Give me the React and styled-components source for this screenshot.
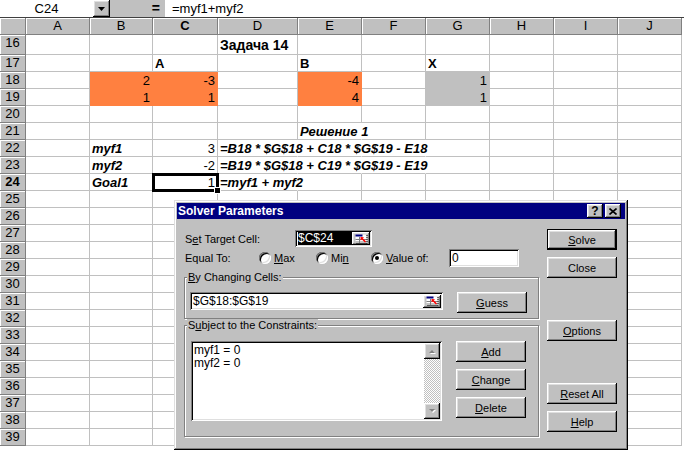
import React from "react";
import styled, { createGlobalStyle } from "styled-components";

const GlobalStyle = createGlobalStyle`
  html, body { margin: 0; padding: 0; }
  body {
    width: 684px;
    height: 450px;
    overflow: hidden;
    background: #fff;
    font-family: "Liberation Sans", Arial, sans-serif;
  }
`;

const ORANGE = "#ff8040";
const SILVER = "#c0c0c0";

const raised = `
  box-shadow: inset -1px -1px #000, inset 1px 1px #fff, inset -2px -2px #808080, inset 2px 2px #dfdfdf;
`;
const sunken = `
  box-shadow: inset 1px 1px #808080, inset -1px -1px #fff, inset 2px 2px #000, inset -2px -2px #dfdfdf;
`;

const Screen = styled.div`
  position: relative;
  width: 684px;
  height: 450px;
  overflow: hidden;
  background: #fff;
  color: #000;
`;

/* formula bar */
const FormulaBar = styled.div`
  display: flex;
  height: 17px;
  border-bottom: 1px solid #404040;
  font-size: 13px;
  line-height: 17px;
`;

const NameBox = styled.div`
  width: 93px;
  text-align: center;
`;

const DropButton = styled.div`
  width: 17px;
  height: 17px;
  box-sizing: border-box;
  background: ${SILVER};
  ${raised}
  display: flex;
  align-items: center;
  justify-content: center;
`;

const EqualsArea = styled.div`
  width: 55px;
  box-sizing: border-box;
  background: ${SILVER};
  text-align: right;
  padding-right: 5px;
  font-weight: bold;
  font-size: 14px;
`;

const FormulaText = styled.div`
  flex: 1;
  padding-left: 7px;
`;

/* sheet */
const Sheet = styled.div`
  display: grid;
  grid-template-columns: 26px 64px 63px 65px 80px 64px 64px 64px 64px 64px 64px;
  grid-template-rows: 17px 20px repeat(23, 17px);
  font-size: 13px;
`;

const Header = styled.div`
  box-sizing: border-box;
  background: ${SILVER};
  border-right: 1px solid #808080;
  border-bottom: 1px solid #808080;
  box-shadow: inset 1px 1px 0 #fff;
  text-align: center;
  line-height: 16px;
  font-weight: ${(p) => (p.$active ? "bold" : "normal")};
  overflow: hidden;
`;

const Cell = styled.div`
  position: relative;
  box-sizing: border-box;
  border-right: 1px solid ${(p) => (p.$noRight ? "transparent" : p.$fill || SILVER)};
  border-bottom: 1px solid ${(p) => p.$fill || SILVER};
  background: ${(p) => p.$fill || "transparent"};
  padding: 1px 2px 0 2px;
  white-space: nowrap;
  text-align: ${(p) => p.$align || "left"};
  font-weight: ${(p) => (p.$bold ? "bold" : "normal")};
  font-style: ${(p) => (p.$italic ? "italic" : "normal")};
  font-size: ${(p) => (p.$big ? "14px" : "13px")};
  line-height: ${(p) => (p.$big ? "18px" : "16px")};
  outline: ${(p) => (p.$selected ? "3px solid #000" : "none")};
  outline-offset: -2px;
  z-index: ${(p) => (p.$selected ? 2 : "auto")};
`;

const FillHandle = styled.span`
  position: absolute;
  right: -4px;
  bottom: -4px;
  width: 5px;
  height: 5px;
  background: #000;
  border: 1px solid #fff;
`;

const COLS = ["A", "B", "C", "D", "E", "F", "G", "H", "I", "J"];
const ROWS = Array.from({ length: 24 }, (_, i) => 16 + i);

const CELLS = {
  D16: { v: "Задача 14", bold: true, big: true },
  C17: { v: "A", bold: true },
  E17: { v: "B", bold: true },
  G17: { v: "X", bold: true },
  B18: { v: "2", align: "right", fill: ORANGE },
  C18: { v: "-3", align: "right", fill: ORANGE },
  E18: { v: "-4", align: "right", fill: ORANGE },
  G18: { v: "1", align: "right", fill: SILVER },
  B19: { v: "1", align: "right", fill: ORANGE },
  C19: { v: "1", align: "right", fill: ORANGE },
  E19: { v: "4", align: "right", fill: ORANGE },
  G19: { v: "1", align: "right", fill: SILVER },
  E21: { v: "Решение 1", bold: true, italic: true, span: 2 },
  B22: { v: "myf1", bold: true, italic: true },
  C22: { v: "3", align: "right" },
  D22: { v: "=B18 * $G$18 + C18 * $G$19 - E18", bold: true, italic: true, span: 4 },
  B23: { v: "myf2", bold: true, italic: true },
  C23: { v: "-2", align: "right" },
  D23: { v: "=B19 * $G$18 + C19 * $G$19 - E19", bold: true, italic: true, span: 4 },
  B24: { v: "Goal1", bold: true, italic: true },
  C24: { v: "1", align: "right", selected: true },
  D24: { v: "=myf1 + myf2", bold: true, italic: true, span: 2 },
};

// cells whose right gridline is hidden by overflowing text
const HIDDEN = new Set();
Object.entries(CELLS).forEach(([id, d]) => {
  if (!d.span) return;
  const col = COLS.indexOf(id[0]);
  const row = id.slice(1);
  for (let i = 0; i < d.span - 1; i++) HIDDEN.add(COLS[col + i] + row);
});

/* dialog */
const Dialog = styled.div`
  position: absolute;
  left: 174px;
  top: 200px;
  width: 454px;
  height: 250px;
  box-sizing: border-box;
  padding: 3px;
  background: ${SILVER};
  box-shadow: inset -1px -1px #000, inset 1px 1px #dfdfdf, inset -2px -2px #808080, inset 2px 2px #fff;
  font-family: "Liberation Sans", Arial, sans-serif;
  font-size: 11px;
  display: flex;
  flex-direction: column;
`;

const TitleBar = styled.div`
  height: 16px;
  background: #000080;
  color: #fff;
  font-weight: bold;
  font-size: 12px;
  display: flex;
  align-items: center;
  justify-content: space-between;
  padding: 0 4px 0 1px;
`;

const TitleButtons = styled.div`
  display: flex;
  gap: 2px;
`;

const TitleButton = styled.div`
  width: 16px;
  height: 14px;
  box-sizing: border-box;
  background: ${SILVER};
  ${raised}
  color: #000;
  font-weight: bold;
  font-size: 12px;
  line-height: 14px;
  text-align: center;
  display: flex;
  align-items: center;
  justify-content: center;
`;

const Body = styled.div`
  display: flex;
  gap: 8px;
  padding: 11px 8px 0 7px;
`;

const LeftPane = styled.div`
  width: 356px;
  display: flex;
  flex-direction: column;
`;

const FormRow = styled.div`
  display: flex;
  align-items: center;
  height: ${(p) => p.$h || 17}px;
  margin-top: ${(p) => p.$mt || 0}px;
`;

const Label = styled.div`
  width: ${(p) => p.$w}px;
  padding-left: 1px;
  box-sizing: border-box;
`;

const TextBox = styled.div`
  box-sizing: border-box;
  width: ${(p) => p.$w}px;
  height: ${(p) => p.$h}px;
  background: #fff;
  ${sunken}
  display: flex;
  align-items: center;
  padding: 0 2px 0 3px;
  font-size: 12px;
`;

const Selection = styled.span`
  flex: 1;
  background: #000;
  color: #fff;
  line-height: 13px;
`;

const TextValue = styled.span`
  flex: 1;
  line-height: 13px;
`;

const RefButton = styled.div`
  width: 18px;
  height: 13px;
  box-sizing: border-box;
  background: ${SILVER};
  ${raised}
  display: flex;
  align-items: center;
  justify-content: center;
`;

const RadioOption = styled.div`
  width: ${(p) => p.$w}px;
  display: flex;
  align-items: center;
  gap: 3px;
`;

const RadioCircle = styled.span`
  width: 12px;
  height: 12px;
  border-radius: 50%;
  background: #fff;
  box-shadow: inset 1px 1px #808080, inset -1px -1px #fff, inset 2px 2px #000, inset -2px -2px #dfdfdf;
  display: flex;
  align-items: center;
  justify-content: center;
  &::after {
    content: "";
    width: 4px;
    height: 4px;
    border-radius: 50%;
    background: ${(p) => (p.$on ? "#000" : "transparent")};
  }
`;

const Group = styled.div`
  position: relative;
  margin-top: ${(p) => p.$mt}px;
  border: 1px solid #808080;
  box-shadow: 1px 1px 0 #fff, inset 1px 1px 0 #fff;
  padding: ${(p) => p.$pad};
  display: flex;
  align-items: flex-start;
`;

const GroupLabel = styled.span`
  position: absolute;
  top: -7px;
  left: 2px;
  padding: 0 1px;
  background: ${SILVER};
  line-height: 13px;
`;

const Button = styled.button`
  width: 70px;
  height: 21px;
  padding: 0;
  margin: 0;
  margin-top: ${(p) => p.$mt || 0}px;
  box-sizing: border-box;
  background: ${SILVER};
  border: ${(p) => (p.$default ? "1px solid #000" : "none")};
  ${raised}
  font-family: "Liberation Sans", Arial, sans-serif;
  font-size: 11px;
  color: #000;
`;

const ButtonStack = styled.div`
  display: flex;
  flex-direction: column;
  gap: 7px;
  margin-left: ${(p) => p.$ml}px;
`;

const RightPane = styled.div`
  display: flex;
  flex-direction: column;
  margin-top: -1px;
`;

const ListBox = styled.div`
  box-sizing: border-box;
  width: 251px;
  height: 80px;
  background: #fff;
  ${sunken}
  padding: 2px;
  display: flex;
`;

const ListItems = styled.div`
  flex: 1;
  padding: 1px 0 0 1px;
  font-size: 12px;
  line-height: 13px;
`;

const ScrollBar = styled.div`
  width: 16px;
  display: flex;
  flex-direction: column;
  background: repeating-conic-gradient(${SILVER} 0 25%, #fff 0 50%) 0 0 / 2px 2px;
`;

const ScrollArrow = styled.div`
  width: 16px;
  height: 16px;
  box-sizing: border-box;
  background: ${SILVER};
  ${raised}
  display: flex;
  align-items: center;
  justify-content: center;
`;

const ScrollTrack = styled.div`
  flex: 1;
`;

const DownTriangle = () => (
  <svg width="7" height="4" viewBox="0 0 7 4">
    <polygon points="0,0 7,0 3.5,4" fill="#000" />
  </svg>
);

const CloseGlyph = () => (
  <svg width="8" height="7" viewBox="0 0 8 7">
    <path d="M0.5 0.5 L7.5 6.5 M7.5 0.5 L0.5 6.5" stroke="#000" strokeWidth="1.6" />
  </svg>
);

const RefIcon = () => (
  <svg width="13" height="10" viewBox="0 0 13 10">
    <rect x="0.5" y="0.5" width="11" height="8.5" fill="#fff" />
    <rect x="0.5" y="0.5" width="7" height="2" fill="#000080" />
    <path d="M0.5 5.5 H11.5 M0.5 8 H11.5 M4.5 3 V9" stroke="#808080" strokeWidth="1" />
    <path d="M12 1 V9.5 H1" stroke="#000" strokeWidth="1" strokeDasharray="1 1" fill="none" />
    <path d="M10.5 8 L7 4.5" stroke="#ff0000" strokeWidth="1.6" />
    <polygon points="5.5,3 9,3.2 5.7,6.5" fill="#ff0000" />
  </svg>
);

const ArrowGlyph = ({ up }) => (
  <svg width="7" height="5" viewBox="0 0 7 5">
    <polygon points={up ? "1,5 7,5 4,2" : "1,1 7,1 4,4"} fill="#fff" />
    <polygon points={up ? "0,4 6,4 3,1" : "0,0 6,0 3,3"} fill="#808080" />
  </svg>
);

const Radio = ({ w, on, children }) => (
  <RadioOption $w={w}>
    <RadioCircle $on={on} />
    <span>{children}</span>
  </RadioOption>
);

export default function App() {
  return (
    <Screen>
      <GlobalStyle />
      <FormulaBar>
        <NameBox>C24</NameBox>
        <DropButton>
          <DownTriangle />
        </DropButton>
        <EqualsArea>=</EqualsArea>
        <FormulaText>=myf1+myf2</FormulaText>
      </FormulaBar>

      <Sheet>
        <Header />
        {COLS.map((c) => (
          <Header key={c} $active={c === "C"}>
            {c}
          </Header>
        ))}
        {ROWS.map((r) => (
          <React.Fragment key={r}>
            <Header $active={r === 24}>{r}</Header>
            {COLS.map((c) => {
              const id = c + r;
              const d = CELLS[id] || {};
              return (
                <Cell
                  key={id}
                  $fill={d.fill}
                  $align={d.align}
                  $bold={d.bold}
                  $italic={d.italic}
                  $big={d.big}
                  $selected={d.selected}
                  $noRight={HIDDEN.has(id)}
                >
                  {d.v}
                  {d.selected && <FillHandle />}
                </Cell>
              );
            })}
          </React.Fragment>
        ))}
      </Sheet>

      <Dialog>
        <TitleBar>
          <span>Solver Parameters</span>
          <TitleButtons>
            <TitleButton>?</TitleButton>
            <TitleButton>
              <CloseGlyph />
            </TitleButton>
          </TitleButtons>
        </TitleBar>

        <Body>
          <LeftPane>
            <FormRow>
              <Label $w={111}>
                S<u>e</u>t Target Cell:
              </Label>
              <TextBox $w={77} $h={17}>
                <Selection>$C$24</Selection>
                <RefButton>
                  <RefIcon />
                </RefButton>
              </TextBox>
            </FormRow>

            <FormRow $h={18} $mt={2}>
              <Label $w={75}>Equal To:</Label>
              <Radio w={57}>
                <u>M</u>ax
              </Radio>
              <Radio w={55}>
                Mi<u>n</u>
              </Radio>
              <Radio w={78} on>
                <u>V</u>alue of:
              </Radio>
              <TextBox $w={70} $h={18}>
                <TextValue>0</TextValue>
              </TextBox>
            </FormRow>

            <Group $mt={10} $pad="14px 5px 5px 5px">
              <GroupLabel>
                <u>B</u>y Changing Cells:
              </GroupLabel>
              <TextBox $w={253} $h={18}>
                <TextValue>$G$18:$G$19</TextValue>
                <RefButton>
                  <RefIcon />
                </RefButton>
              </TextBox>
              <Button style={{ marginLeft: 14 }}>
                <u>G</u>uess
              </Button>
            </Group>

            <Group $mt={6} $pad="15px 5px 15px 6px">
              <GroupLabel>
                S<u>u</u>bject to the Constraints:
              </GroupLabel>
              <ListBox>
                <ListItems>
                  <div>myf1 = 0</div>
                  <div>myf2 = 0</div>
                </ListItems>
                <ScrollBar>
                  <ScrollArrow>
                    <ArrowGlyph up />
                  </ScrollArrow>
                  <ScrollTrack />
                  <ScrollArrow>
                    <ArrowGlyph />
                  </ScrollArrow>
                </ScrollBar>
              </ListBox>
              <ButtonStack $ml={14}>
                <Button>
                  <u>A</u>dd
                </Button>
                <Button>
                  <u>C</u>hange
                </Button>
                <Button>
                  <u>D</u>elete
                </Button>
              </ButtonStack>
            </Group>
          </LeftPane>

          <RightPane>
            <Button $default>
              <u>S</u>olve
            </Button>
            <Button $mt={7}>Close</Button>
            <Button $mt={42}>
              <u>O</u>ptions
            </Button>
            <Button $mt={42}>
              <u>R</u>eset All
            </Button>
            <Button $mt={7}>
              <u>H</u>elp
            </Button>
          </RightPane>
        </Body>
      </Dialog>
    </Screen>
  );
}
